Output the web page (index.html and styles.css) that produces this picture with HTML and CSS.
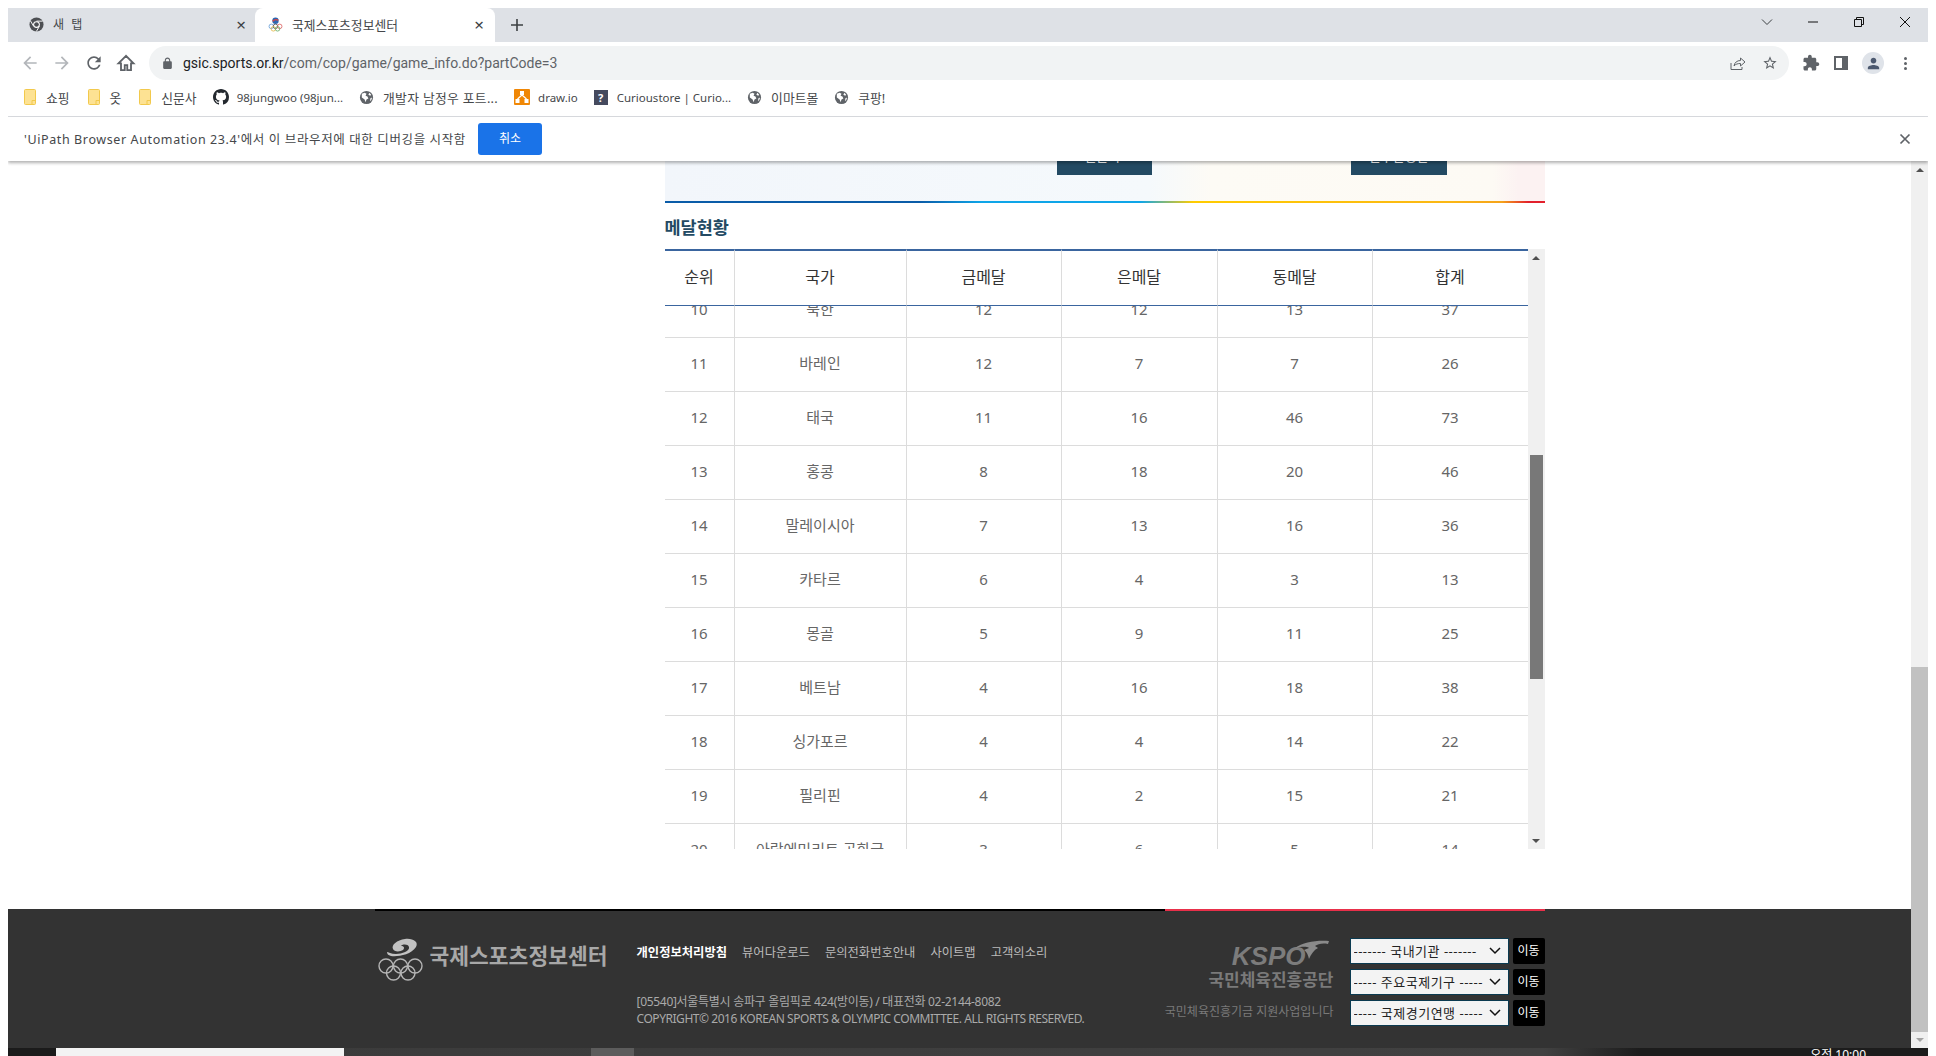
FILE: index.html
```html
<!DOCTYPE html>
<html lang="ko">
<head>
    <meta charset="UTF-8">
    <title>국제스포츠정보센터</title>
    <link rel="stylesheet" href="styles.css">
</head>
<body>

    <svg class="icon-defs" aria-hidden="true">
        <symbol id="i-globe" viewBox="0 0 16 16">
            <circle cx="8" cy="8" r="7" fill="#5f6368"/>
            <path d="M3 4l3-1 2 1-1 2 2 1 1 2-2 1-1 3-1-3-3-2zM11 3l2 2-1 1-2-1zM12 9l2-1-1 3-1 1z" fill="#fff"/>
        </symbol>
        <symbol id="i-folder" viewBox="0 0 12 16">
            <rect x="0.5" y="0.5" width="11" height="15" rx="1" fill="#fde293" stroke="#f2c94c"/>
            <path d="M8 15.5v-4h3.5" fill="none" stroke="#f2c94c"/>
        </symbol>
    </svg>

    <div class="browser">

        <!-- Tab strip -->
        <div class="tabstrip">
            <div class="tab">
                <svg class="tab-icon" viewBox="0 0 16 16">
                    <circle cx="8" cy="8" r="7.5" fill="#4d4f53"/>
                    <circle cx="8" cy="8" r="3.6" fill="#fff"/>
                    <circle cx="8" cy="8" r="2.5" fill="#4d4f53"/>
                    <path d="M8 4.4h6.6M4.9 9.8L1.6 4.2M11.1 9.8l-3.3 5.7" stroke="#fff" stroke-width="1"/>
                </svg>
                <span class="tab-title">새 탭</span>
                <span class="tab-close">×</span>
            </div>
            <div class="tab tab-active">
                <svg class="tab-icon" viewBox="0 0 16 16">
                    <circle cx="8" cy="4" r="3.4" fill="#2b66b1"/>
                    <path d="M5 4.5c2-2 4-2 6-1" stroke="#e0413c" stroke-width="1.4" fill="none"/>
                    <g fill="none" stroke-width="0.9">
                        <circle cx="3.5" cy="10" r="2.4" stroke="#6aa0d8"/>
                        <circle cx="8" cy="10" r="2.4" stroke="#555"/>
                        <circle cx="12.5" cy="10" r="2.4" stroke="#d66"/>
                        <circle cx="5.7" cy="12.6" r="2.4" stroke="#e4b94c"/>
                        <circle cx="10.2" cy="12.6" r="2.4" stroke="#6ab06a"/>
                    </g>
                </svg>
                <span class="tab-title">국제스포츠정보센터</span>
                <span class="tab-close">×</span>
            </div>
            <svg class="new-tab" viewBox="0 0 12 12"><path d="M6 0v12M0 6h12" stroke="#3c4043" stroke-width="1.6"/></svg>

            <div class="window-controls">
                <svg viewBox="0 0 12 12"><path d="M1 3.5l5 5 5-5" fill="none" stroke="#3c4043"/></svg>
                <svg viewBox="0 0 12 12"><path d="M1 6h10" stroke="#111"/></svg>
                <svg viewBox="0 0 12 12"><path d="M1.500 3.500h7v7h-7zM3.500 3.500v-2h7v7h-2" fill="none" stroke="#111"/></svg>
                <svg viewBox="0 0 12 12"><path d="M1 1l10 10M11 1L1 11" stroke="#111"/></svg>
            </div>
        </div>

        <!-- Toolbar -->
        <div class="toolbar">
            <svg class="nav-icon" viewBox="0 0 24 24"><path fill="#b3b6ba" d="M20 11H7.830l5.590-5.590L12 4l-8 8 8 8 1.410-1.410L7.830 13H20v-2z"/></svg>
            <svg class="nav-icon" viewBox="0 0 24 24"><path fill="#b3b6ba" d="M12 4l-1.410 1.410L16.170 11H4v2h12.170l-5.580 5.590L12 20l8-8z"/></svg>
            <svg class="nav-icon" viewBox="0 0 24 24"><path fill="#5f6368" d="M17.650 6.350C16.200 4.900 14.210 4 12 4c-4.420 0-7.990 3.580-7.990 8s3.570 8 7.990 8c3.730 0 6.840-2.550 7.730-6h-2.080c-.82 2.330-3.040 4-5.650 4-3.310 0-6-2.690-6-6s2.690-6 6-6c1.660 0 3.140.69 4.220 1.780L13 11h7V4l-2.350 2.350z"/></svg>
            <svg class="nav-icon" viewBox="0 0 24 24"><path fill="none" stroke="#5f6368" stroke-width="2.200" d="M12 3.500L3 12.500h3v8h4.500v-6h3v6H18v-8h3z"/></svg>
            <div class="omnibox">
                <svg class="lock" viewBox="0 0 24 24"><path fill="#5f6368" fill-rule="evenodd" d="M18 8h-1V6c0-2.760-2.240-5-5-5S7 3.240 7 6v2H6c-1.100 0-2 .9-2 2v10c0 1.100.9 2 2 2h12c1.100 0 2-.9 2-2V10c0-1.100-.9-2-2-2zM9 8V6c0-1.660 1.340-3 3-3s3 1.340 3 3v2H9z"/></svg>
                <span class="url"><b>gsic.sports.or.kr</b>/com/cop/game/game_info.do?partCode=3</span>
                <svg class="omni-icon" viewBox="0 0 16 16"><path d="M1 8v6.500h11V12M4 11c.5-3.500 3-5.500 6.500-5.500V3l4.500 4-4.500 4V8.500C8 8.500 5.500 9 4 11z" fill="none" stroke="#5f6368"/></svg>
                <svg class="omni-icon" viewBox="0 0 24 24"><path fill="#5f6368" d="M22 9.240l-7.190-.62L12 2 9.190 8.630 2 9.240l5.460 4.730L5.820 21 12 17.270 18.180 21l-1.630-7.030L22 9.240zM12 15.400l-3.760 2.270 1-4.280-3.320-2.880 4.380-.38L12 6.100l1.710 4.040 4.380.38-3.320 2.880 1 4.280L12 15.400z"/></svg>
            </div>
            <div class="toolbar-right">
                <svg class="ext-icon" viewBox="0 0 24 24"><path fill="#5f6368" d="M20.500 11H19V7c0-1.100-.9-2-2-2h-4V3.500C13 2.120 11.880 1 10.500 1S8 2.120 8 3.500V5H4c-1.100 0-1.990.9-1.990 2v3.800H3.500c1.490 0 2.700 1.210 2.700 2.700s-1.210 2.700-2.700 2.700H2V20c0 1.100.9 2 2 2h3.800v-1.500c0-1.490 1.210-2.700 2.700-2.700 1.490 0 2.700 1.210 2.700 2.700V22H17c1.100 0 2-.9 2-2v-4h1.500c1.380 0 2.500-1.120 2.500-2.500S21.880 11 20.500 11z"/></svg>
                <span class="side-panel"></span>
                <span class="avatar">
                    <svg viewBox="0 0 24 24"><path fill="#4d5a70" d="M12 12c2.210 0 4-1.790 4-4s-1.790-4-4-4-4 1.790-4 4 1.790 4 4 4zm0 2c-2.670 0-8 1.340-8 4v2h16v-2c0-2.660-5.330-4-8-4z"/></svg>
                </span>
                <span class="kebab"><i></i><i></i><i></i></span>
            </div>
        </div>

        <!-- Bookmarks -->
        <div class="bookmarks">
            <span class="bm bm-ko bm-wide"><svg class="bm-folder"><use href="#i-folder"/></svg>쇼핑</span>
            <span class="bm bm-ko bm-wide"><svg class="bm-folder"><use href="#i-folder"/></svg>옷</span>
            <span class="bm bm-ko"><svg class="bm-folder"><use href="#i-folder"/></svg>신문사</span>
            <span class="bm">
                <svg class="bm-icon" viewBox="0 0 16 16"><path fill="#24292f" d="M8 0C3.580 0 0 3.580 0 8c0 3.540 2.290 6.530 5.470 7.590.4.07.55-.17.55-.38 0-.19-.01-.82-.01-1.490-2.010.37-2.530-.49-2.690-.94-.09-.23-.48-.94-.82-1.130-.28-.15-.68-.52-.01-.53.63-.01 1.080.58 1.230.82.72 1.210 1.870.87 2.330.66.07-.52.28-.87.51-1.070-1.780-.2-3.640-.89-3.640-3.950 0-.87.31-1.590.82-2.150-.08-.2-.36-1.020.08-2.120 0 0 .67-.21 2.200.82.64-.18 1.320-.27 2-.27.68 0 1.360.09 2 .27 1.530-1.040 2.200-.82 2.200-.82.44 1.100.16 1.920.08 2.120.51.56.82 1.270.82 2.150 0 3.070-1.870 3.750-3.650 3.950.29.25.54.73.54 1.480 0 1.070-.01 1.930-.01 2.200 0 .21.15.46.55.38A8.013 8.013 0 0016 8c0-4.420-3.580-8-8-8z"/></svg>
                98jungwoo (98jun...
            </span>
            <span class="bm bm-ko bm-dev"><svg class="bm-globe"><use href="#i-globe"/></svg>개발자 남정우 포트...</span>
            <span class="bm">
                <svg class="bm-icon" viewBox="0 0 16 16">
                    <rect width="16" height="16" rx="1" fill="#f08705"/>
                    <path d="M6 2h4v4H6zM1.500 10h4v4h-4zM10.500 10h4v4h-4z" fill="#fff"/>
                    <path d="M8 6l-4.500 4M8 6l4.500 4" stroke="#fff" stroke-width="1.200"/>
                </svg>
                draw.io
            </span>
            <span class="bm"><span class="bm-unknown">?</span>Curioustore | Curio...</span>
            <span class="bm bm-ko"><svg class="bm-globe"><use href="#i-globe"/></svg>이마트몰</span>
            <span class="bm bm-ko"><svg class="bm-globe"><use href="#i-globe"/></svg>쿠팡!</span>
        </div>

        <!-- Debugging infobar -->
        <div class="infobar">
            <span class="infobar-text">'UiPath Browser Automation 23.4'에서 이 브라우저에 대한 디버깅을 시작함</span>
            <span class="infobar-btn">취소</span>
            <svg class="infobar-close" viewBox="0 0 12 12"><path d="M1.500 1.500l9 9M10.500 1.500l-9 9" stroke="#5f6368" stroke-width="1.700"/></svg>
        </div>

        <!-- Page viewport -->
        <div class="viewport">
            <div class="page">

                <div class="container">
                    <div class="content">
                        <div class="game-panel">
                            <span class="panel-btn panel-btn-a"><span>일본 수</span></span>
                            <span class="panel-btn panel-btn-b"><span>선수단명단</span></span>
                        </div>

                        <h3 class="section-title">메달현황</h3>

                        <div class="medal-box">
                            <div class="medal-scroll">
                                <table class="medal-table medal-head">
                                    <colgroup>
                                        <col class="col-rank"><col class="col-nation"><col class="col-g"><col class="col-s"><col class="col-b"><col class="col-t">
                                    </colgroup>
                                    <tr><th>순위</th><th>국가</th><th>금메달</th><th>은메달</th><th>동메달</th><th>합계</th></tr>
                                </table>
                                <table class="medal-table medal-body">
                                    <colgroup>
                                        <col class="col-rank"><col class="col-nation"><col class="col-g"><col class="col-s"><col class="col-b"><col class="col-t">
                                    </colgroup>
                                    <tr><td>10</td><td>북한</td><td>12</td><td>12</td><td>13</td><td>37</td></tr>
                                    <tr><td>11</td><td>바레인</td><td>12</td><td>7</td><td>7</td><td>26</td></tr>
                                    <tr><td>12</td><td>태국</td><td>11</td><td>16</td><td>46</td><td>73</td></tr>
                                    <tr><td>13</td><td>홍콩</td><td>8</td><td>18</td><td>20</td><td>46</td></tr>
                                    <tr><td>14</td><td>말레이시아</td><td>7</td><td>13</td><td>16</td><td>36</td></tr>
                                    <tr><td>15</td><td>카타르</td><td>6</td><td>4</td><td>3</td><td>13</td></tr>
                                    <tr><td>16</td><td>몽골</td><td>5</td><td>9</td><td>11</td><td>25</td></tr>
                                    <tr><td>17</td><td>베트남</td><td>4</td><td>16</td><td>18</td><td>38</td></tr>
                                    <tr><td>18</td><td>싱가포르</td><td>4</td><td>4</td><td>14</td><td>22</td></tr>
                                    <tr><td>19</td><td>필리핀</td><td>4</td><td>2</td><td>15</td><td>21</td></tr>
                                    <tr><td>20</td><td>아랍에미리트 공화국</td><td>3</td><td>6</td><td>5</td><td>14</td></tr>
                                </table>
                            </div>
                            <div class="inner-scrollbar">
                                <span class="arrow-up"></span>
                                <span class="inner-thumb"></span>
                                <span class="arrow-down"></span>
                            </div>
                        </div>
                    </div>
                </div>

                <!-- Footer -->
                <div class="footer">
                    <div class="footer-inner">
                        <div class="footer-logo">
                            <svg class="center-mark" viewBox="0 0 46 44">
                                <path d="M14 19c6 1 20-1 25-9 3-5-3-9-11-8-8 1-14 6-12 10 1 3 7 3 10 1 2-2 1-4-2-4 2-2 7-2 8 1 1 4-7 7-13 7-5 0-8-2-9-2 0 2 1 3 4 4z" fill="#c2c2c2"/>
                                <g fill="none" stroke="#b5b5b5" stroke-width="1.400">
                                    <circle cx="9" cy="29" r="7"/>
                                    <circle cx="23.500" cy="29" r="7"/>
                                    <circle cx="38" cy="29" r="7"/>
                                    <circle cx="16.500" cy="36" r="7"/>
                                    <circle cx="31" cy="36" r="7"/>
                                </g>
                            </svg>
                            <span class="center-name">국제스포츠정보센터</span>
                        </div>

                        <div class="footer-info">
                            <ul class="footer-links">
                                <li class="on">개인정보처리방침</li>
                                <li>뷰어다운로드</li>
                                <li>문의전화번호안내</li>
                                <li>사이트맵</li>
                                <li>고객의소리</li>
                            </ul>
                            <p class="address address-post">[05540]서울특별시 송파구 올림픽로 424(방이동) / 대표전화 02-2144-8082</p>
                            <p class="address address-copy">COPYRIGHT© 2016 KOREAN SPORTS &amp; OLYMPIC COMMITTEE. ALL RIGHTS RESERVED.</p>
                        </div>

                        <div class="footer-kspo">
                            <div class="kspo-logo">
                                <span class="kspo-word">KSPO</span>
                                <svg class="kspo-wing" viewBox="0 0 34 20">
                                    <path d="M0 8C8 2 22 0 34 1l-1 3c-6-1-10 0-13 2l3 2c-4 2-7 6-9 11-1-4-2-7-5-9l5-2c-3-2-8-1-14 0z" fill="#8a8a8a"/>
                                </svg>
                            </div>
                            <div class="kspo-name">국민체육진흥공단</div>
                            <div class="kspo-note">국민체육진흥기금 지원사업입니다</div>
                        </div>

                        <div class="footer-selects">
                            <div class="select-row">
                                <select><option>------- 국내기관 -------</option></select>
                                <span class="go-btn">이동</span>
                            </div>
                            <div class="select-row">
                                <select><option>----- 주요국제기구 -----</option></select>
                                <span class="go-btn">이동</span>
                            </div>
                            <div class="select-row">
                                <select><option>----- 국제경기연맹 -----</option></select>
                                <span class="go-btn">이동</span>
                            </div>
                        </div>
                    </div>
                </div>
            </div>

            <div class="page-scrollbar">
                <span class="arrow-up"></span>
                <span class="page-thumb"></span>
                <span class="arrow-down"></span>
            </div>
        </div>

        <!-- Windows taskbar, only the top edge is on screen -->
        <div class="taskbar">
            <span class="task-start"></span>
            <span class="task-search"></span>
            <span class="task-tile"></span>
            <span class="task-clock">오전 10:00</span>
        </div>
    </div>

</body>
</html>
```

FILE: styles.css
```css
/* General Page Styles */
html, body {
    height: 100%;
    margin: 0;
    background-color: #fff;
    overflow: hidden;
}

body {
    font-family: "Noto Sans", "Noto Sans CJK KR", sans-serif;
    font-size: 12px;
    color: #3c4043;
}

.icon-defs {
    display: none;
}

.browser {
    width: 1920px;
    height: 1048px;
    margin: 8px 8px 0;
    display: flex;
    flex-direction: column;
    overflow: hidden;
}

/* Tab strip */
.tabstrip {
    height: 34px;
    flex: none;
    display: flex;
    align-items: center;
    background-color: #dee1e6;
}

.tab {
    width: 247px;
    height: 34px;
    box-sizing: border-box;
    padding: 0 9px 2px 21px;
    display: flex;
    align-items: center;
}

.tab-active {
    width: 240px;
    padding: 0 11px 2px 13px;
    background-color: #fff;
    border-radius: 8px 8px 0 0;
}

.tab-icon {
    width: 15px;
    height: 15px;
    margin-right: 9px;
    flex: none;
}

.tab-title {
    flex: 1;
    font-size: 12.800px;
    color: #45474a;
}

.tab:not(.tab-active) .tab-title {
    font-size: 12px;
    letter-spacing: 2px;
}

.tab-close {
    font-size: 17px;
    line-height: 17px;
    color: #3c4043;
}

.new-tab {
    width: 12px;
    height: 12px;
    margin-left: 16px;
}

.window-controls {
    margin-left: auto;
    margin-right: 17px;
    display: flex;
    gap: 34px;
    align-self: flex-start;
    padding-top: 8px;
}

.window-controls svg {
    width: 12px;
    height: 12px;
}

/* Toolbar */
.toolbar {
    height: 42px;
    flex: none;
    display: flex;
    align-items: center;
    padding: 0 0 0 12px;
    gap: 12px;
    box-sizing: border-box;
}

.nav-icon {
    width: 20px;
    height: 20px;
    flex: none;
}

.omnibox {
    width: 1640px;
    height: 34px;
    flex: none;
    margin-left: 1px;
    box-sizing: border-box;
    padding: 0 11px 0 12px;
    display: flex;
    align-items: center;
    gap: 16px;
    background-color: #f1f3f4;
    border-radius: 17px;
}

.lock {
    width: 13px;
    height: 13px;
    flex: none;
    margin-right: -7px;
}

.url {
    flex: 1;
    font-family: Roboto, sans-serif;
    font-size: 14px;
    color: #5f6368;
}

.url b {
    font-weight: 400;
    color: #202124;
}

.omni-icon {
    width: 16px;
    height: 16px;
    flex: none;
}

.toolbar-right {
    display: flex;
    align-items: center;
    gap: 14px;
    margin-left: 1px;
}

.ext-icon {
    width: 18px;
    height: 18px;
}

.side-panel {
    width: 14px;
    height: 14px;
    box-sizing: border-box;
    border: 2px solid #5f6368;
    border-right-width: 6px;
}

.avatar {
    width: 22px;
    height: 22px;
    border-radius: 50%;
    background-color: #dfe3e9;
    display: flex;
    align-items: center;
    justify-content: center;
}

.avatar svg {
    width: 17px;
    height: 17px;
}

.kebab {
    width: 4px;
    margin-left: 6px;
    display: flex;
    flex-direction: column;
    gap: 2px;
}

.kebab i {
    width: 3px;
    height: 3px;
    border-radius: 50%;
    background-color: #5f6368;
}

/* Bookmarks */
.bookmarks {
    height: 33px;
    flex: none;
    box-sizing: border-box;
    padding: 0 0 6px 16px;
    display: flex;
    align-items: center;
    border-bottom: 1px solid #dadce0;
    font-size: 11.500px;
    color: #45474a;
}

.bm {
    display: flex;
    align-items: center;
    white-space: nowrap;
    margin-right: 16px;
}

.bm-wide {
    margin-right: 18px;
}

.bm-ko {
    font-size: 12.800px;
}

.bm-dev {
    letter-spacing: 0.3px;
}

.bm-folder {
    width: 12px;
    height: 16px;
    margin-right: 10px;
}

.bm-icon {
    width: 16px;
    height: 16px;
    margin-right: 8px;
}

.bm-globe {
    width: 15px;
    height: 15px;
    margin-right: 9px;
}

.bm-unknown {
    width: 14px;
    height: 15px;
    margin-right: 9px;
    background-color: #454a5e;
    color: #fff;
    font-size: 11px;
    font-weight: 700;
    line-height: 15px;
    text-align: center;
}

/* Infobar */
.infobar {
    height: 44px;
    flex: none;
    box-sizing: border-box;
    padding: 0 17px 0 16px;
    display: flex;
    align-items: center;
    position: relative;
    z-index: 2;
    background-color: #fff;
    box-shadow: 0 2px 3px rgba(0, 0, 0, 0.3);
}

.infobar-text {
    padding-bottom: 2px;
    font-size: 12.500px;
    color: #45474a;
    letter-spacing: 0.61px;
}

.infobar-btn {
    width: 64px;
    height: 32px;
    margin-left: 12px;
    background-color: #1a73e8;
    border-radius: 3px;
    color: #fff;
    font-size: 12px;
    line-height: 32px;
    text-align: center;
}

.infobar-close {
    width: 12px;
    height: 12px;
    margin-left: auto;
}

/* Page area */
.viewport {
    flex: 1;
    min-height: 0;
    display: flex;
}

.page {
    flex: 1;
    display: flex;
    flex-direction: column;
}

.container {
    width: 1170px;
    flex: 1;
    margin: 0 auto;
    display: flex;
    justify-content: flex-end;
}

.content {
    width: 880px;
}

.game-panel {
    height: 40px;
    border-bottom: 2px solid;
    border-image: linear-gradient(to right, #0a5ca8 0%, #0a5ca8 29%, #0ea5e8 36%, #0ea5e8 54%, #ffcc00 60%, #fbb714 89%, #f5a31a 95%, #e2202c 98%, #e2202c 100%) 1;
    background: linear-gradient(to right, #f2f6fb 0%, #f5f9fc 55%, #fdfbf5 62%, #fdfaf4 94%, #fcf2f2 97%, #fcf2f2 100%);
    display: flex;
}

.panel-btn {
    height: 14px;
    background-color: #234a63;
    overflow: hidden;
    color: #fff;
    font-size: 13px;
    text-align: center;
}

.panel-btn span {
    display: block;
    margin-top: -14px;
    line-height: 18px;
}

.panel-btn-a {
    width: 95px;
    margin-left: 392px;
}

.panel-btn-b {
    width: 96px;
    margin-left: 199px;
}

.section-title {
    margin: 0;
    height: 46px;
    font-size: 17.500px;
    font-weight: 700;
    line-height: 48px;
    color: #234a63;
}

/* Medal table */
.medal-box {
    height: 600px;
    display: flex;
}

.medal-scroll {
    width: 863px;
    height: 600px;
    overflow: hidden;
}

.medal-table {
    width: 863px;
    table-layout: fixed;
    border-collapse: separate;
    border-spacing: 0;
    font-size: 15px;
    text-align: center;
}

.col-rank { width: 70px; }
.col-nation { width: 172px; }
.col-g { width: 155px; }
.col-s { width: 156px; }
.col-b { width: 155px; }
.col-t { width: 155px; }

.medal-head {
    position: relative;
    z-index: 1;
    background-color: #fff;
}

.medal-head th {
    height: 57px;
    box-sizing: border-box;
    padding: 0 0 4px;
    border-top: 2px solid #3a659f;
    border-bottom: 1px solid #3a659f;
    border-right: 1px solid #dcdcdc;
    font-size: 16px;
    font-weight: 400;
    color: #333;
}

.medal-body {
    margin-top: -22px;
}

.medal-body td {
    height: 54px;
    box-sizing: border-box;
    padding: 0 0 4px;
    border-bottom: 1px solid #dcdcdc;
    border-right: 1px solid #dcdcdc;
    color: #666;
}

.medal-table tr > :last-child {
    border-right: none;
}

/* Scrollbars */
.inner-scrollbar,
.page-scrollbar {
    width: 17px;
    flex: none;
    display: flex;
    flex-direction: column;
    align-items: center;
    background-color: #f0f0f0;
}

.arrow-up {
    margin-top: 7px;
    border: 4px solid transparent;
    border-top: none;
    border-bottom: 4px solid #505050;
}

.arrow-down {
    margin-top: auto;
    margin-bottom: 6px;
    border: 4px solid transparent;
    border-bottom: none;
    border-top: 4px solid #505050;
}

.inner-thumb {
    width: 13px;
    height: 224px;
    margin-top: 195px;
    background-color: #787878;
}

.page-thumb {
    width: 17px;
    height: 365px;
    margin-top: 495px;
    background-color: #c1c1c1;
}

.page-scrollbar .arrow-down {
    border-top-color: #a3a3a3;
}

/* Footer */
.footer {
    height: 139px;
    flex: none;
    background-color: #333;
}

.footer-inner {
    width: 1170px;
    height: 139px;
    box-sizing: border-box;
    margin: 0 auto;
    display: flex;
    border-top: 2px solid;
    border-image: linear-gradient(to right, #000 790px, #e8304a 790px) 1;
}

.footer-logo {
    width: 262px;
    flex: none;
    padding: 26px 0 0 2px;
    box-sizing: border-box;
    display: flex;
    align-items: flex-start;
}

.center-mark {
    width: 46px;
    height: 44px;
    flex: none;
}

.center-name {
    margin: 3px 0 0 7px;
    font-size: 21.500px;
    font-weight: 700;
    line-height: 32px;
    color: #a8a8a8;
    white-space: nowrap;
}

.footer-info {
    width: 500px;
    flex: none;
}

.footer-links {
    list-style: none;
    margin: 33px 0 31px;
    padding: 0;
    display: flex;
    gap: 15px;
    font-size: 12.300px;
    line-height: 18px;
    color: #bbb;
}

.footer-links .on {
    color: #fff;
    font-weight: 700;
}

.address {
    margin: 0;
    font-size: 12px;
    line-height: 17px;
    color: #aaa;
    white-space: nowrap;
}

.address-post {
    letter-spacing: -0.3px;
}

.address-copy {
    letter-spacing: -0.45px;
}

.footer-kspo {
    width: 197px;
    flex: none;
    padding-top: 29px;
    box-sizing: border-box;
    text-align: right;
    color: #7a7a7a;
}

.kspo-logo {
    height: 28px;
    display: flex;
    justify-content: flex-end;
    position: relative;
}

.kspo-word {
    font-family: "Liberation Sans", sans-serif;
    font-size: 26px;
    font-style: italic;
    font-weight: 700;
    line-height: 32px;
    margin-right: 28px;
    color: #7c7c7c;
}

.kspo-wing {
    width: 34px;
    height: 20px;
    position: absolute;
    right: 5px;
    top: 0;
}

.kspo-name {
    font-size: 17px;
    font-weight: 700;
    line-height: 24px;
}

.kspo-note {
    margin-top: 11px;
    font-size: 12px;
    line-height: 18px;
}

.footer-selects {
    padding: 27px 0 0 16px;
    flex: 1;
    display: flex;
    flex-direction: column;
    gap: 5px;
}

.select-row {
    display: flex;
    gap: 4px;
}

.select-row select {
    width: 159px;
    height: 26px;
    padding: 0 0 0 3px;
    border: 1px solid #0b3a50;
    background: #f3f3f3 url("data:image/svg+xml,%3Csvg xmlns='http://www.w3.org/2000/svg' width='12' height='8'%3E%3Cpath d='M1 1l5 5 5-5' fill='none' stroke='%23111' stroke-width='1.500'/%3E%3C/svg%3E") no-repeat right 7px center;
    color: #222;
    font-family: inherit;
    font-size: 13px;
    letter-spacing: 0.5px;
    border-radius: 0;
    appearance: none;
}

.go-btn {
    width: 32px;
    height: 26px;
    background-color: #000;
    border-radius: 2px;
    color: #fff;
    font-size: 12px;
    line-height: 25px;
    text-align: center;
}

/* Taskbar */
.taskbar {
    height: 8px;
    flex: none;
    display: flex;
    background: linear-gradient(to right, #3a3a3a 0%, #414141 80%, #1c1c1c 85%, #1c1c1c 100%);
    overflow: hidden;
}

.task-start {
    width: 48px;
    background-color: #1b1b1b;
}

.task-search {
    width: 288px;
    background-color: #f3f3f3;
}

.task-tile {
    width: 43px;
    margin-left: 247px;
    background-color: #5c5c5c;
}

.task-clock {
    margin-left: auto;
    margin-right: 62px;
    padding-top: 1px;
    color: #fff;
    font-size: 12px;
    line-height: 12px;
}
```
